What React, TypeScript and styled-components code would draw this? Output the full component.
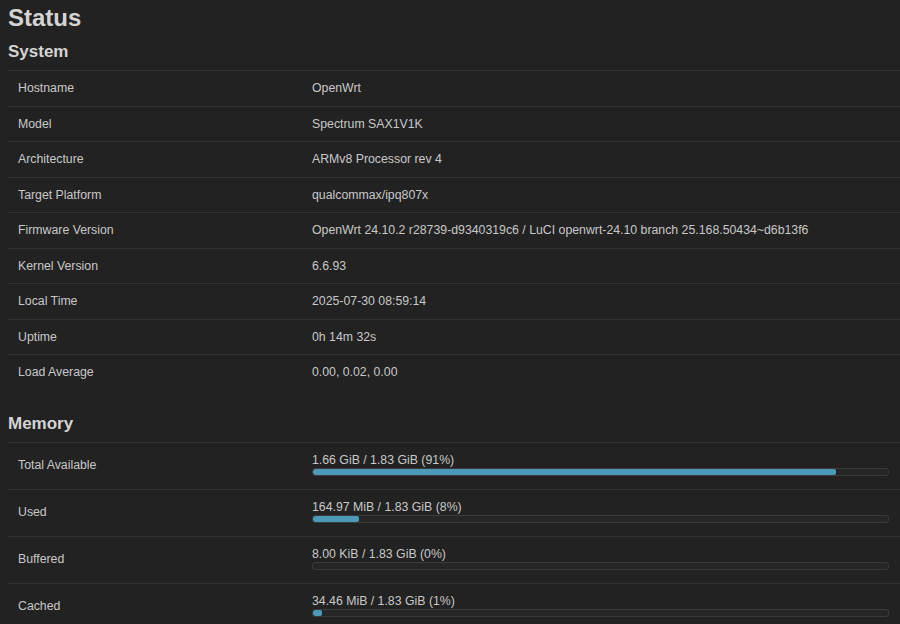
import styled, { createGlobalStyle } from 'styled-components'

const GlobalStyle = createGlobalStyle`
    html, body {
        margin: 0;
        padding: 0;
        background: #222222;
    }

    body {
        font-family: 'Liberation Sans', Arial, sans-serif;
        color: #cccccc;
    }
`

const Page = styled.div`
    padding: 4px 0 0 8px;
    width: 900px;
    box-sizing: border-box;
`

const PageTitle = styled.h2`
    margin: 0;
    font-size: 24px;
    line-height: 28px;
    font-weight: 700;
    color: #d4d4d4;
`

const SectionTitle = styled.h3<{ $first?: boolean }>`
    margin: 0;
    padding: ${({ $first }) => ($first ? '10px' : '12px')} 0 8px;
    font-size: 17px;
    line-height: 20px;
    font-weight: 700;
    color: #d4d4d4;
`

const Table = styled.div`
    display: flex;
    flex-direction: column;
`

const Row = styled.div`
    display: grid;
    grid-template-columns: 304px 1fr;
    align-items: center;
    border-top: 1px solid #333333;
    min-height: 35.5px;
    box-sizing: border-box;
`

const BarRow = styled(Row)`
    align-items: start;
    min-height: 47px;
    padding: 10px 0 13px;
`

const Label = styled.div<{ $offset?: boolean }>`
    padding-left: 10px;
    padding-top: ${({ $offset }) => ($offset ? '5px' : '0')};
    font-size: 12.3px;
    color: #c8c8c8;
`

const Value = styled.div`
    font-size: 12.3px;
    color: #c8c8c8;
    padding-right: 11px;
`

const BarText = styled.div`
    line-height: 14px;
`

const Bar = styled.div`
    margin-top: 1px;
    height: 8px;
    border: 1px solid #3a3a3a;
    border-radius: 3px;
    background: #262626;
    overflow: hidden;
    box-sizing: border-box;
`

const BarFill = styled.div`
    height: 100%;
    background: #4b9ab8;
    border-radius: 2px;
`

const Spacer = styled.div`
    height: 12px;
`

const system: [string, string][] = [
    ['Hostname', 'OpenWrt'],
    ['Model', 'Spectrum SAX1V1K'],
    ['Architecture', 'ARMv8 Processor rev 4'],
    ['Target Platform', 'qualcommax/ipq807x'],
    ['Firmware Version', 'OpenWrt 24.10.2 r28739-d9340319c6 / LuCI openwrt-24.10 branch 25.168.50434~d6b13f6'],
    ['Kernel Version', '6.6.93'],
    ['Local Time', '2025-07-30 08:59:14'],
    ['Uptime', '0h 14m 32s'],
    ['Load Average', '0.00, 0.02, 0.00'],
]

const memory: [string, string, number][] = [
    ['Total Available', '1.66 GiB / 1.83 GiB (91%)', 91],
    ['Used', '164.97 MiB / 1.83 GiB (8%)', 8],
    ['Buffered', '8.00 KiB / 1.83 GiB (0%)', 0],
    ['Cached', '34.46 MiB / 1.83 GiB (1%)', 1.5],
]

function App() {
    return (
        <Page>
            <GlobalStyle />
            <PageTitle>Status</PageTitle>
            <SectionTitle $first>System</SectionTitle>
            <Table>
                {system.map(([label, value]) => (
                    <Row key={label}>
                        <Label>{label}</Label>
                        <Value>{value}</Value>
                    </Row>
                ))}
            </Table>
            <Spacer />
            <SectionTitle>Memory</SectionTitle>
            <Table>
                {memory.map(([label, value, pct]) => (
                    <BarRow key={label}>
                        <Label $offset>{label}</Label>
                        <Value>
                            <BarText>{value}</BarText>
                            <Bar>
                                <BarFill style={{ width: `${pct}%` }} />
                            </Bar>
                        </Value>
                    </BarRow>
                ))}
            </Table>
        </Page>
    )
}

export default App
